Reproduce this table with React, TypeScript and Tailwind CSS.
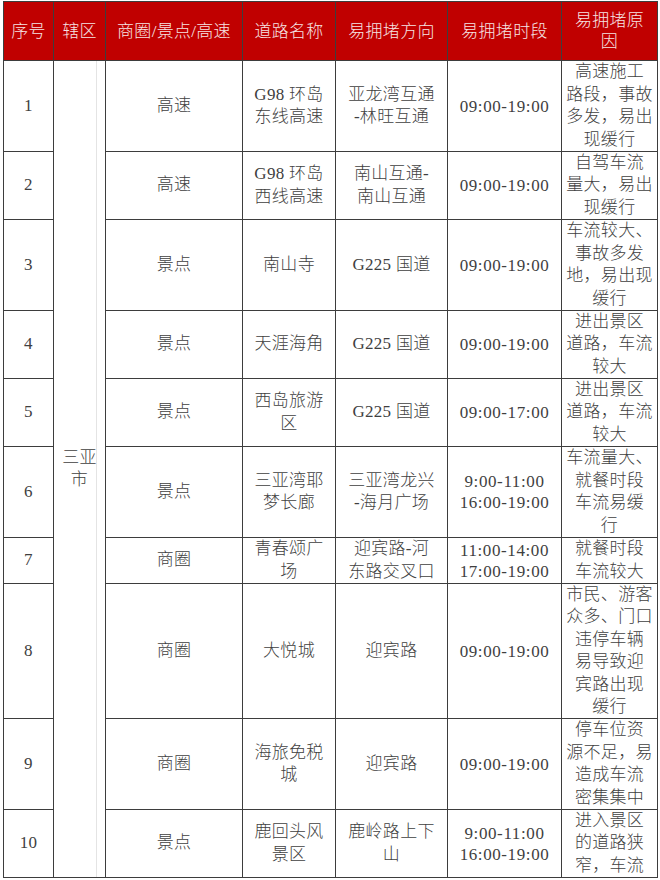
const headers: string[][] = [
  ["序号"],
  ["辖区"],
  ["商圈/景点/高速"],
  ["道路名称"],
  ["易拥堵方向"],
  ["易拥堵时段"],
  ["易拥堵原", "因"],
];

type Row = {
  no: string;
  kind: string;
  road: string[];
  dir: string[];
  time: string[];
  reason: string[];
};

const rows: Row[] = [
  {
    no: "1",
    kind: "高速",
    road: ["G98 环岛", "东线高速"],
    dir: ["亚龙湾互通", "-林旺互通"],
    time: ["09:00-19:00"],
    reason: ["高速施工", "路段，事故", "多发，易出", "现缓行"],
  },
  {
    no: "2",
    kind: "高速",
    road: ["G98 环岛", "西线高速"],
    dir: ["南山互通-", "南山互通"],
    time: ["09:00-19:00"],
    reason: ["自驾车流", "量大，易出", "现缓行"],
  },
  {
    no: "3",
    kind: "景点",
    road: ["南山寺"],
    dir: ["G225 国道"],
    time: ["09:00-19:00"],
    reason: ["车流较大、", "事故多发", "地，易出现", "缓行"],
  },
  {
    no: "4",
    kind: "景点",
    road: ["天涯海角"],
    dir: ["G225 国道"],
    time: ["09:00-19:00"],
    reason: ["进出景区", "道路，车流", "较大"],
  },
  {
    no: "5",
    kind: "景点",
    road: ["西岛旅游", "区"],
    dir: ["G225 国道"],
    time: ["09:00-17:00"],
    reason: ["进出景区", "道路，车流", "较大"],
  },
  {
    no: "6",
    kind: "景点",
    road: ["三亚湾耶", "梦长廊"],
    dir: ["三亚湾龙兴", "-海月广场"],
    time: ["9:00-11:00", "16:00-19:00"],
    reason: ["车流量大、", "就餐时段", "车流易缓", "行"],
  },
  {
    no: "7",
    kind: "商圈",
    road: ["青春颂广", "场"],
    dir: ["迎宾路-河", "东路交叉口"],
    time: ["11:00-14:00", "17:00-19:00"],
    reason: ["就餐时段", "车流较大"],
  },
  {
    no: "8",
    kind: "商圈",
    road: ["大悦城"],
    dir: ["迎宾路"],
    time: ["09:00-19:00"],
    reason: ["市民、游客", "众多、门口", "违停车辆", "易导致迎", "宾路出现", "缓行"],
  },
  {
    no: "9",
    kind: "商圈",
    road: ["海旅免税", "城"],
    dir: ["迎宾路"],
    time: ["09:00-19:00"],
    reason: ["停车位资", "源不足，易", "造成车流", "密集集中"],
  },
  {
    no: "10",
    kind: "景点",
    road: ["鹿回头风", "景区"],
    dir: ["鹿岭路上下", "山"],
    time: ["9:00-11:00", "16:00-19:00"],
    reason: ["进入景区", "的道路狭", "窄，车流"],
  },
];

function Lines({ lines }: { lines: string[] }) {
  return (
    <div className="flex flex-col items-center">
      {lines.map((l, i) => (
        <span key={i} className="whitespace-nowrap">
          {l}
        </span>
      ))}
    </div>
  );
}

function Cell({ children }: { children: React.ReactNode }) {
  return (
    <div className="flex items-center justify-center overflow-hidden border-r border-b border-[#3d3d3d] text-center">
      {children}
    </div>
  );
}

export default function App() {
  return (
    <div className="min-h-[880px] w-[660px] overflow-hidden bg-white pt-[1px] pl-[3px]">
      <div
        className="grid w-[655px] grid-cols-[50px_52px_137px_93px_112px_114px_96px] grid-rows-[59px_91px_68px_91px_68px_68px_91px_46px_135px_91px_68px] border-t border-l border-[#3d3d3d] text-[17px] font-light leading-[22.5px] tracking-[0.3px] text-[#3f3f3f]"
        style={{ fontFamily: '"Liberation Serif", "Noto Sans CJK SC", serif' }}
      >
        {headers.map((h, i) => (
          <div
            key={"h" + i}
            className="flex items-center justify-center border-r border-b border-[#3d3d3d] bg-[#c00000] text-center leading-[21px] text-[#f6e4e4]"
          >
            <Lines lines={h} />
          </div>
        ))}
        {rows.map((r, i) => (
          <div key={"r" + i} className="contents">
            <Cell>{r.no}</Cell>
            {i === 0 && (
              <div className="row-span-10 flex items-center justify-center border-r border-b border-[#3d3d3d] bg-[linear-gradient(to_right,transparent_42px,#e4e4e4_42px,#e4e4e4_43px,transparent_43px)] px-[1px] text-center">
                <Lines lines={["三亚", "市"]} />
              </div>
            )}
            <Cell>{r.kind}</Cell>
            <Cell>
              <Lines lines={r.road} />
            </Cell>
            <Cell>
              <Lines lines={r.dir} />
            </Cell>
            <Cell>
              <div className="leading-[21px] tracking-[0.6px]">
                <Lines lines={r.time} />
              </div>
            </Cell>
            <Cell>
              <Lines lines={r.reason} />
            </Cell>
          </div>
        ))}
      </div>
    </div>
  );
}
